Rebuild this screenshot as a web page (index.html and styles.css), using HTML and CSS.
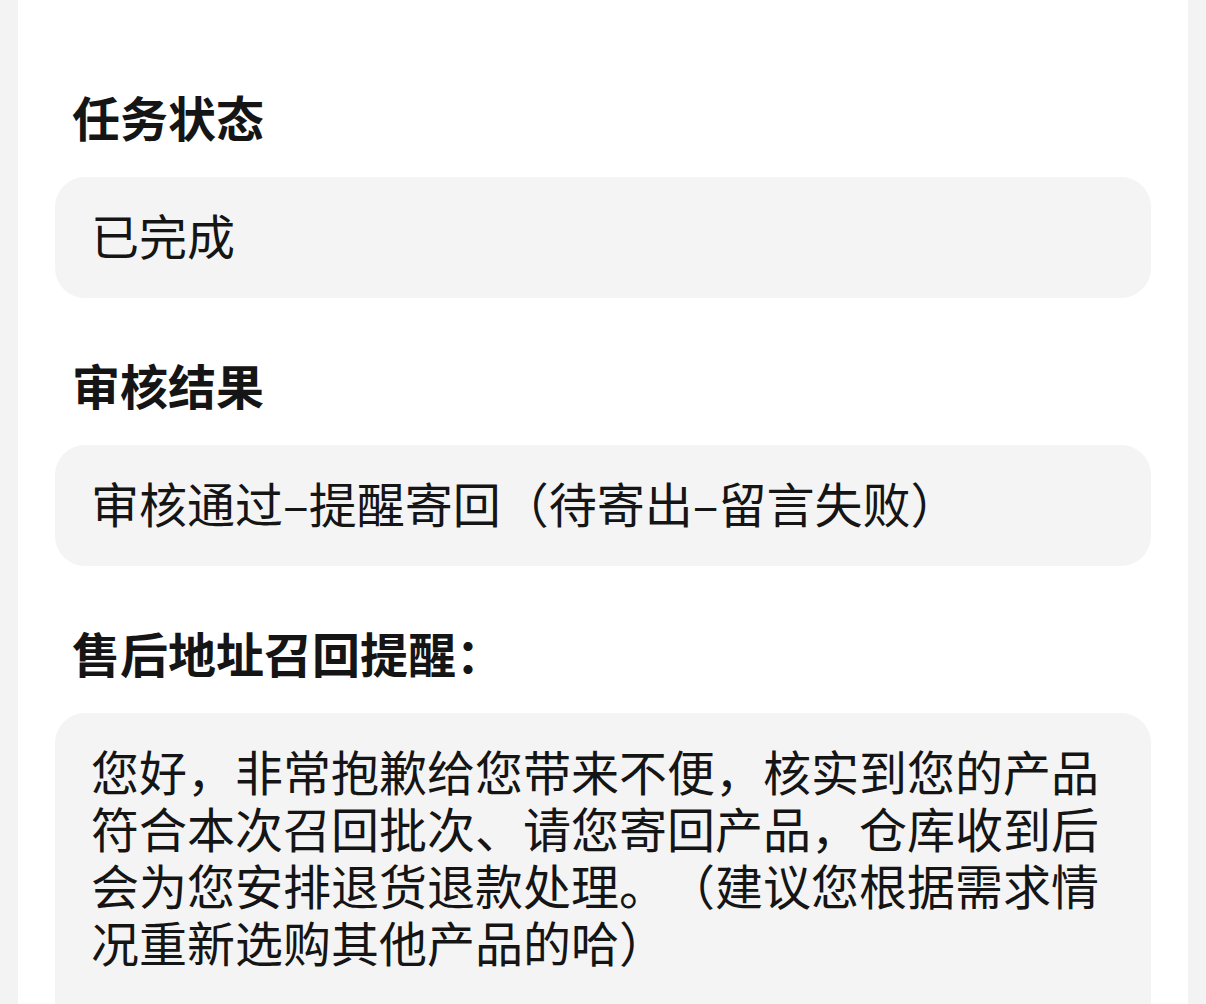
FILE: index.html
```html
<!DOCTYPE html>
<html lang="zh-CN">
<head>
<meta charset="utf-8">
<title>任务详情</title>
<link rel="stylesheet" href="styles.css">
</head>
<body>
<div class="page">
  <div class="card">
    <div class="field">
      <div class="label">任务状态</div>
      <div class="value">已完成</div>
    </div>
    <div class="field">
      <div class="label">审核结果</div>
      <div class="value">审核通过–提醒寄回（待寄出–留言失败）</div>
    </div>
    <div class="field">
      <div class="label">售后地址召回提醒：</div>
      <div class="value value-long">您好，非常抱歉给您带来不便，核实到您的产品符合本次召回批次、请您寄回产品，仓库收到后会为您安排退货退款处理。（建议您根据需求情况重新选购其他产品的哈）</div>
    </div>
  </div>
</div>
</body>
</html>
```

FILE: styles.css
```css
html, body {
  margin: 0;
  padding: 0;
  background: #f3f3f3;
  height: 100%;
  overflow: hidden;
}

.page {
  padding: 0 18px;
  font-family: "Noto Sans CJK SC", "Noto Sans", sans-serif;
  color: #151515;
  text-spacing-trim: space-all;
}

.card {
  background: #ffffff;
  padding: 87px 37px 200px;
  min-height: 1100px;
  display: flex;
  flex-direction: column;
  gap: 57px;
}

.field {
  display: flex;
  flex-direction: column;
  gap: 32px;
}

.label {
  font-size: 48px;
  line-height: 58px;
  font-weight: 700;
  padding-left: 17px;
}

.value {
  background: #f4f4f4;
  border-radius: 30px;
  font-size: 48px;
  line-height: 57px;
  padding: 29px 36px 35px;
}

.value-long {
  padding-bottom: 120px;
}
```
